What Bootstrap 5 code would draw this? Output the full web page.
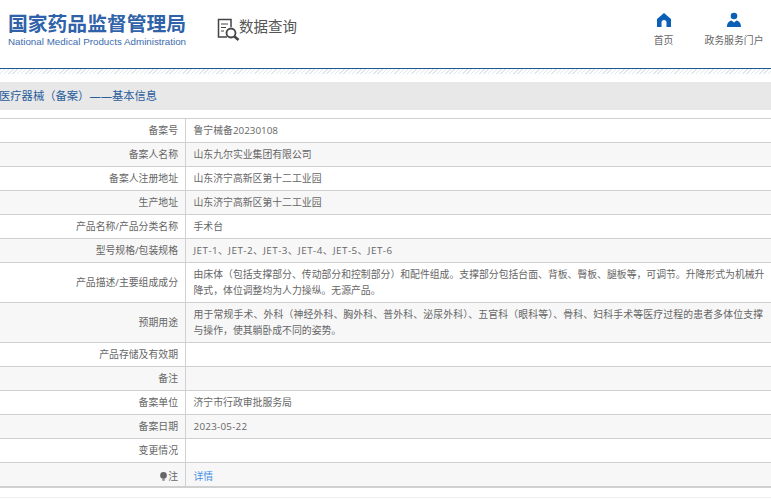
<!DOCTYPE html>
<html lang="zh"><head><meta charset="utf-8"><title>医疗器械</title>
<link href="https://cdn.jsdelivr.net/npm/bootstrap@5.3.0/dist/css/bootstrap.min.css" rel="stylesheet">
<style>
html,body{height:500px;overflow:hidden;background:#fff}
body{font-family:"Open Sans","Noto Sans CJK SC",sans-serif;font-size:9.85px;color:#666}
.hd{height:68px}
.brand-cn{font-size:19.8px;line-height:24px;font-weight:700;color:#2f62a8;letter-spacing:0;white-space:nowrap;font-family:"Noto Sans CJK SC",sans-serif}
.brand-en{font-family:"Liberation Sans",sans-serif;font-size:9.8px;line-height:12px;color:#3d6cae;white-space:nowrap;margin-top:1px}
.brand{margin-left:8px;padding-top:11px;width:178px}
.query{margin-left:30px;padding-top:17px;font-size:14.5px;line-height:20px;color:#555}
.qico{width:24px;height:24px;margin-right:-1px;margin-top:1px}
.navs{margin-left:auto;padding-top:12px;padding-right:7.5px;gap:31px}
.navi{text-align:center;color:#666;font-size:9.85px;line-height:12px}
.navi svg{display:block;margin:0 auto 5.5px;width:16px;height:16px}
.rule{height:5px;border-top:1.5px solid #1f5a96;background:repeating-linear-gradient(135deg,#dde7ee 0 1px,#fff 1px 3px);box-sizing:content-box}
.crumb{margin-top:8px;height:28px;line-height:27px;background:#e8e8e8;color:#2a5d9c;font-size:11.3px;white-space:nowrap}
.crumb span{margin-left:-1px;display:inline-block}
.info{margin:7.5px 0 0;width:771px;table-layout:fixed;border-collapse:collapse;font-size:9.85px;line-height:16px;color:#666;--bs-table-bg:transparent}
.info td{padding:3.5px 8px 3.5px 7.5px;border:0;border-top:1.5px solid #d0d0d0;height:24px;vertical-align:middle;box-shadow:none}
.info .lab{width:185.5px;text-align:right;border-right:1.5px solid #d0d0d0;padding-right:7px}
.info tr:nth-child(even) td{background:#f7f7f7}
.info tr:last-child td{border-bottom:2.5px solid #d0d0d0;height:25px;padding-top:5px;padding-bottom:2px}
.info .two td{height:40px}
.info a{color:#4a90e2;text-decoration:none}
.jline{display:block;text-align:justify;text-align-last:justify;white-space:nowrap}
.ltn{letter-spacing:.25px}
.ltw{letter-spacing:.45px}
.bulb{width:7px;height:9px;margin-right:1px;vertical-align:-1px}
.end{margin-top:9px;border-top:1px solid #eee}
</style></head><body>
<header class="hd d-flex">
 <div class="brand"><div class="brand-cn">国家药品监督管理局</div><div class="brand-en">National Medical Products Administration</div></div>
 <div class="query d-flex align-items-start">
  <svg class="qico" viewBox="0 0 24 24" fill="none" stroke="#444"><path d="M11 19H2.500V1.500H15V9" stroke-width="1.500"/><path d="M5 6h7M5 9.500h5M5 13h3" stroke-width="1.200"/><circle cx="15" cy="15" r="4.500" stroke-width="1.800"/><path d="M18.500 18.500l4 3.500" stroke-width="2.500"/></svg>
  <span>数据查询</span>
 </div>
 <nav class="navs d-flex">
  <div class="navi"><svg viewBox="0 0 16 16"><path fill="#0b5fb4" d="M8 1 15 7v8h-4.500v-4.500a2.500 2.500 0 0 0-5 0V15H1V7z"/></svg>首页</div>
  <div class="navi"><svg viewBox="0 0 16 16"><circle cx="8" cy="4" r="3.300" fill="#0b5fb4"/><path fill="#0b5fb4" d="M1 15c0-4 2-6 4.500-6.500L8 10.500l2.500-2C13 9 15 11 15 15z"/></svg>政务服务门户</div>
 </nav>
</header>
<div class="rule"></div>
<div class="crumb"><span>医疗器械（备案）——基本信息</span></div>
<table class="table info">
<tbody>
<tr><td class="lab">备案号</td><td>鲁宁械备20230108</td></tr>
<tr><td class="lab">备案人名称</td><td>山东九尔实业集团有限公司</td></tr>
<tr><td class="lab">备案人注册地址</td><td>山东济宁高新区第十二工业园</td></tr>
<tr><td class="lab">生产地址</td><td>山东济宁高新区第十二工业园</td></tr>
<tr><td class="lab">产品名称/产品分类名称</td><td>手术台</td></tr>
<tr><td class="lab">型号规格/包装规格</td><td class="ltw">JET-1、JET-2、JET-3、JET-4、JET-5、JET-6</td></tr>
<tr class="two"><td class="lab">产品描述/主要组成成分</td><td><span class="jline">由床体（包括支撑部分、传动部分和控制部分）和配件组成。支撑部分包括台面、背板、臀板、腿板等，可调节。升降形式为机械升</span>降式，体位调整均为人力操纵。无源产品。</td></tr>
<tr class="two"><td class="lab">预期用途</td><td><span class="jline">用于常规手术、外科（神经外科、胸外科、普外科、泌尿外科）、五官科（眼科等）、骨科、妇科手术等医疗过程的患者多体位支撑</span>与操作，使其躺卧成不同的姿势。</td></tr>
<tr><td class="lab">产品存储及有效期</td><td></td></tr>
<tr><td class="lab">备注</td><td></td></tr>
<tr><td class="lab">备案单位</td><td>济宁市行政审批服务局</td></tr>
<tr><td class="lab">备案日期</td><td class="ltn">2023-05-22</td></tr>
<tr><td class="lab">变更情况</td><td></td></tr>
<tr><td class="lab"><svg class="bulb" viewBox="0 0 7 9"><circle cx="3.500" cy="3.400" r="3.300" fill="#666"/><rect x="2.300" y="6.500" width="2.400" height="2.300" fill="#888"/></svg>注</td><td><a href="#">详情</a></td></tr>
</tbody></table>
<div class="end"></div>
</body></html>
